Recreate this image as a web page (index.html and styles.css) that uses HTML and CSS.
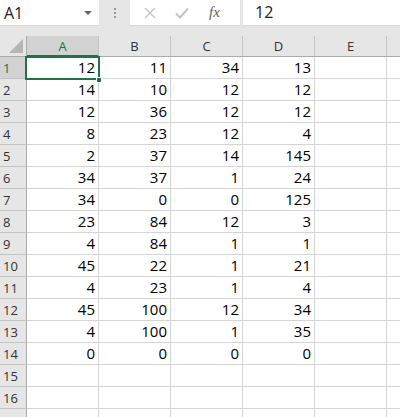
FILE: index.html
```html
<!DOCTYPE html>
<html>
<head>
<meta charset="utf-8">
<link rel="stylesheet" href="styles.css">
</head>
<body>
<div class="app">
  <div class="fbar">
    <div class="namebox"><span class="nb-text">A1</span><span class="nb-arrow"></span></div>
    <div class="grip"><span></span><span></span><span></span></div>
    <div class="btns">
      <svg class="ico" width="14" height="14" viewBox="0 0 14 14"><path d="M2 2 L12 12 M12 2 L2 12" stroke="#c4c4c4" stroke-width="1.4" fill="none"/></svg>
      <svg class="ico" width="16" height="14" viewBox="0 0 16 14"><path d="M2 7.5 L6 11.5 L14 2.5" stroke="#c4c4c4" stroke-width="2" fill="none"/></svg>
      <span class="fx">fx</span>
    </div>
    <div class="finput">12</div>
  </div>
  <div class="sheet">
    <div class="corner"><span class="tri"></span></div>
    <div class="ch sel">A</div><div class="ch">B</div><div class="ch">C</div><div class="ch">D</div><div class="ch">E</div><div class="ch"></div>

    <div class="rh sel">1</div><div class="c a1">12<span class="selbox"></span><span class="handle"></span></div><div class="c">11</div><div class="c">34</div><div class="c">13</div><div class="c"></div><div class="c"></div>
    <div class="rh">2</div><div class="c">14</div><div class="c">10</div><div class="c">12</div><div class="c">12</div><div class="c"></div><div class="c"></div>
    <div class="rh">3</div><div class="c">12</div><div class="c">36</div><div class="c">12</div><div class="c">12</div><div class="c"></div><div class="c"></div>
    <div class="rh">4</div><div class="c">8</div><div class="c">23</div><div class="c">12</div><div class="c">4</div><div class="c"></div><div class="c"></div>
    <div class="rh">5</div><div class="c">2</div><div class="c">37</div><div class="c">14</div><div class="c">145</div><div class="c"></div><div class="c"></div>
    <div class="rh">6</div><div class="c">34</div><div class="c">37</div><div class="c">1</div><div class="c">24</div><div class="c"></div><div class="c"></div>
    <div class="rh">7</div><div class="c">34</div><div class="c">0</div><div class="c">0</div><div class="c">125</div><div class="c"></div><div class="c"></div>
    <div class="rh">8</div><div class="c">23</div><div class="c">84</div><div class="c">12</div><div class="c">3</div><div class="c"></div><div class="c"></div>
    <div class="rh">9</div><div class="c">4</div><div class="c">84</div><div class="c">1</div><div class="c">1</div><div class="c"></div><div class="c"></div>
    <div class="rh">10</div><div class="c">45</div><div class="c">22</div><div class="c">1</div><div class="c">21</div><div class="c"></div><div class="c"></div>
    <div class="rh">11</div><div class="c">4</div><div class="c">23</div><div class="c">1</div><div class="c">4</div><div class="c"></div><div class="c"></div>
    <div class="rh">12</div><div class="c">45</div><div class="c">100</div><div class="c">12</div><div class="c">34</div><div class="c"></div><div class="c"></div>
    <div class="rh">13</div><div class="c">4</div><div class="c">100</div><div class="c">1</div><div class="c">35</div><div class="c"></div><div class="c"></div>
    <div class="rh">14</div><div class="c">0</div><div class="c">0</div><div class="c">0</div><div class="c">0</div><div class="c"></div><div class="c"></div>
    <div class="rh">15</div><div class="c"></div><div class="c"></div><div class="c"></div><div class="c"></div><div class="c"></div><div class="c"></div>
    <div class="rh">16</div><div class="c"></div><div class="c"></div><div class="c"></div><div class="c"></div><div class="c"></div><div class="c"></div>
    <div class="rh"></div><div class="c"></div><div class="c"></div><div class="c"></div><div class="c"></div><div class="c"></div><div class="c"></div>
  </div>
</div>
</body>
</html>
```
FILE: styles.css
```css
* { box-sizing: border-box; }
html, body { margin: 0; padding: 0; }
body {
  width: 400px;
  height: 417px;
  overflow: hidden;
  background: #e6e6e6;
  font-family: "Open Sans", "Noto Sans", sans-serif;
}
.app { display: flex; flex-direction: column; width: 400px; overflow: hidden; }
.fbar {
  display: flex;
  height: 26px;
  margin-bottom: 10px;
}
.namebox {
  width: 99px;
  background: #fff;
  display: flex;
  align-items: center;
  justify-content: space-between;
  padding: 0 7px 0 4px;
  border-bottom: 1px solid #d6d6d6;
}
.nb-text { font-size: 16px; color: #222; }
.nb-arrow {
  width: 0; height: 0;
  border-left: 4px solid transparent;
  border-right: 4px solid transparent;
  border-top: 4px solid #666;
}
.grip {
  width: 31px;
  display: flex;
  flex-direction: column;
  align-items: center;
  justify-content: center;
  gap: 2px;
}
.grip span { width: 2px; height: 2px; background: #9a9a9a; }
.btns {
  width: 110px;
  background: #fff;
  display: flex;
  align-items: center;
  padding-left: 13px;
  gap: 17px;
  border-bottom: 1px solid #d6d6d6;
}
.fx {
  font-family: "Liberation Serif", serif;
  font-style: italic;
  font-size: 15px;
  color: #606060;
  margin-left: 2px;
}
.finput {
  flex: 1;
  margin-left: 3px;
  background: #fff;
  font-size: 16px;
  color: #222;
  padding-left: 12px;
  line-height: 25px;
  border-bottom: 1px solid #d6d6d6;
}
.sheet {
  display: grid;
  grid-template-columns: 27px repeat(6, 72px);
  grid-template-rows: 21px;
  grid-auto-rows: 22px;
  background: #fff;
  width: 459px;
}
.corner {
  background: #e6e6e6;
  border-right: 1px solid #ababab;
  border-bottom: 1px solid #ababab;
  position: relative;
}
.tri {
  position: absolute;
  right: 3px;
  bottom: 3px;
  width: 0; height: 0;
  border-left: 14px solid transparent;
  border-bottom: 14px solid #b6b6b6;
}
.ch {
  background: #e6e6e6;
  border-right: 1px solid #c4c4c4;
  border-bottom: 1px solid #ababab;
  font-size: 13px;
  color: #333;
  display: flex;
  align-items: center;
  justify-content: center;
}
.ch.sel {
  background: #d2d2d2;
  color: #217346;
  border-bottom: 2px solid #217346;
}
.rh {
  background: #e6e6e6;
  border-right: 1px solid #ababab;
  border-bottom: 1px solid #c4c4c4;
  font-size: 13px;
  color: #333;
  display: flex;
  align-items: center;
  padding-left: 3px;
}
.rh.sel { background: #d2d2d2; color: #217346; }
.c {
  border-right: 1px solid #d4d4d4;
  border-bottom: 1px solid #d4d4d4;
  font-size: 15px;
  color: #000;
  text-align: right;
  padding-right: 3px;
  line-height: 21px;
}
.a1 { position: relative; }
.selbox {
  position: absolute;
  left: -2px;
  top: -1px;
  width: 75px;
  height: 24px;
  border: 2px solid #217346;
}
.handle {
  position: absolute;
  left: 69px;
  top: 20px;
  width: 6px;
  height: 6px;
  background: #217346;
  border: 1px solid #fff;
  z-index: 2;
}
```
